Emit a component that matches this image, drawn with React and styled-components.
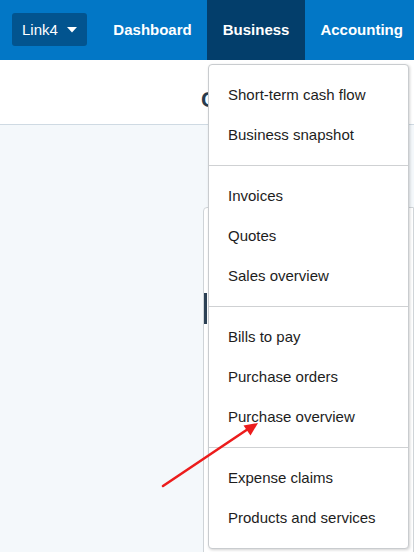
import React from "react";
import styled, { createGlobalStyle } from "styled-components";

const Global = createGlobalStyle`
  html, body { margin: 0; padding: 0; }
  body {
    font-family: "Liberation Sans", Arial, sans-serif;
    background: #f4f8fb;
    width: 414px;
    height: 552px;
    overflow: hidden;
  }
`;

const Page = styled.div`
  position: relative;
  width: 414px;
  height: 552px;
  overflow: hidden;
  background: #f4f8fb;
`;

const Header = styled.header`
  display: flex;
  align-items: stretch;
  height: 60px;
  background: #0277c6;
  padding-left: 12px;
  white-space: nowrap;
`;

const OrgButton = styled.button`
  align-self: center;
  display: flex;
  align-items: center;
  gap: 9px;
  height: 33px;
  padding: 0 10px 0 10px;
  margin-top: -1px;
  border: 0;
  border-radius: 3px;
  background: #02548f;
  color: #fff;
  font-family: "Liberation Sans", Arial, sans-serif;
  font-size: 15px;
`;

const Nav = styled.nav`
  display: flex;
  margin-left: 11px;
`;

const NavItem = styled.a`
  display: flex;
  align-items: center;
  padding: 0 15.5px;
  margin-top: -1px;
  color: #fff;
  font-weight: 700;
  font-size: 15px;
  background: ${(p) => (p.$active ? "#033e6b" : "transparent")};
`;

const SubBar = styled.div`
  height: 64px;
  background: #fff;
  border-bottom: 1px solid #cfdae3;
  padding-left: 201px;
`;

const Title = styled.h1`
  margin: 0;
  padding-top: 27px;
  font-size: 22px;
  line-height: 26px;
  font-weight: 700;
  color: #283b4d;
`;

const Body = styled.main`
  padding: 82px 0 0 203px;
`;

const Card = styled.section`
  height: 400px;
  background: #fff;
  border: 1px solid #cfd4d8;
  border-radius: 4px 0 0 0;
  padding-top: 85px;
`;

const Accent = styled.div`
  width: 3px;
  height: 31px;
  background: #2c4155;
`;

const Menu = styled.div`
  position: absolute;
  left: 208px;
  top: 64px;
  width: 199px;
  background: #fff;
  border: 1px solid #c9cccf;
  border-radius: 4px;
  box-shadow: 1px 1px 3px rgba(0, 0, 0, 0.18);
`;

const Section = styled.ul`
  list-style: none;
  margin: 0;
  padding: 10px 0;
  & + & {
    border-top: 1px solid #cfd1d3;
  }
`;

const Item = styled.li`
  height: 40px;
  line-height: 40px;
  padding-left: 19px;
  font-size: 15px;
  color: #1d1d1d;
  white-space: nowrap;
`;

const ArrowSvg = styled.svg`
  position: absolute;
  left: 0;
  top: 0;
  pointer-events: none;
`;

const sections = [
  ["Short-term cash flow", "Business snapshot"],
  ["Invoices", "Quotes", "Sales overview"],
  ["Bills to pay", "Purchase orders", "Purchase overview"],
  ["Expense claims", "Products and services"],
];

export default function App() {
  return (
    <Page>
      <Global />
      <Header>
        <OrgButton>
          Link4
          <svg width="10" height="6" viewBox="0 0 10 6">
            <path d="M0 0 H10 L5 5.5 Z" fill="#fff" />
          </svg>
        </OrgButton>
        <Nav>
          <NavItem>Dashboard</NavItem>
          <NavItem $active>Business</NavItem>
          <NavItem>Accounting</NavItem>
        </Nav>
      </Header>
      <SubBar>
        <Title>C</Title>
      </SubBar>
      <Body>
        <Card>
          <Accent />
        </Card>
      </Body>
      <Menu>
        {sections.map((s, i) => (
          <Section key={i}>
            {s.map((t) => (
              <Item key={t}>{t}</Item>
            ))}
          </Section>
        ))}
      </Menu>
      <ArrowSvg width="414" height="552" viewBox="0 0 414 552">
        <line x1="163" y1="486" x2="248" y2="429" stroke="#ec1c1c" strokeWidth="2.6" strokeLinecap="round" />
        <path d="M258 423 L243.5 425.5 L250.5 435.5 Z" fill="#ec1c1c" />
      </ArrowSvg>
    </Page>
  );
}
